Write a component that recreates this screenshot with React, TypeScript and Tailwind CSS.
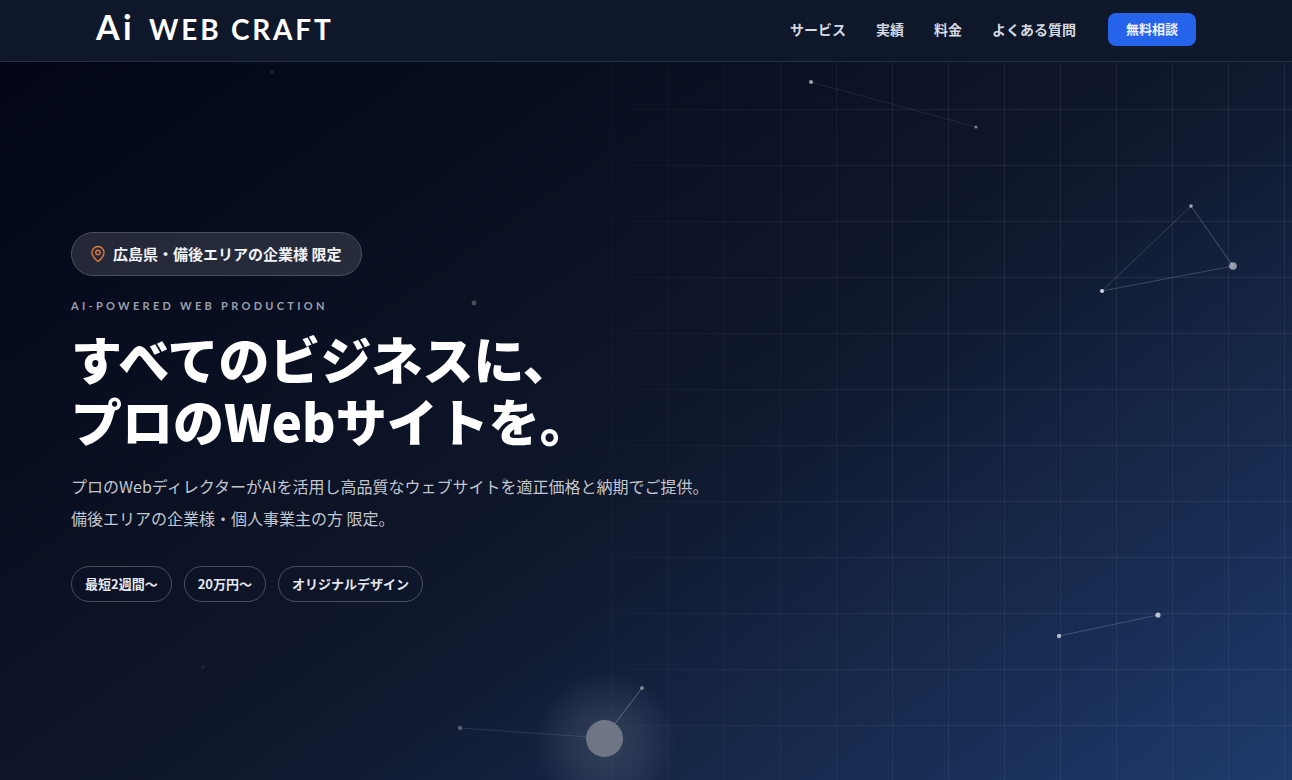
import React from "react";
import { MapPin } from "lucide-react";

const navItems = [
  { label: "サービス", href: "#service" },
  { label: "実績", href: "#works" },
  { label: "料金", href: "#price" },
  { label: "よくある質問", href: "#faq" },
];

const tags = ["最短2週間〜", "20万円〜", "オリジナルデザイン"];

// Particle network, in pixels from the hero's top left corner
const links = [
  { x1: 811, y1: 20, x2: 976, y2: 65, opacity: 0.08 },
  { x1: 1020, y1: 126, x2: 1066, y2: 184, opacity: 0.03 },
  { x1: 1191, y1: 144, x2: 1233, y2: 204, opacity: 0.24 },
  { x1: 1191, y1: 144, x2: 1102, y2: 229, opacity: 0.17 },
  { x1: 1102, y1: 229, x2: 1233, y2: 204, opacity: 0.18 },
  { x1: 1059, y1: 574, x2: 1158, y2: 553, opacity: 0.18 },
  { x1: 460, y1: 666, x2: 604, y2: 676, opacity: 0.11 },
  { x1: 642, y1: 626, x2: 604, y2: 676, opacity: 0.28 },
];

const dots = [
  { x: 272, y: 10, r: 2, opacity: 0.1 },
  { x: 811, y: 20, r: 2, opacity: 0.6 },
  { x: 976, y: 65, r: 1.6, opacity: 0.45 },
  { x: 1191, y: 144, r: 1.8, opacity: 0.6 },
  { x: 1233, y: 204, r: 3.8, opacity: 0.55 },
  { x: 1102, y: 229, r: 2, opacity: 0.8 },
  { x: 150, y: 236, r: 2, opacity: 0.04 },
  { x: 474, y: 241, r: 2.4, opacity: 0.25 },
  { x: 505, y: 419, r: 3, opacity: 0.15 },
  { x: 1059, y: 574, r: 2.2, opacity: 0.65 },
  { x: 1158, y: 553, r: 2.6, opacity: 0.7 },
  { x: 203, y: 605, r: 1.8, opacity: 0.08 },
  { x: 460, y: 666, r: 2.2, opacity: 0.28 },
  { x: 642, y: 626, r: 2, opacity: 0.42 },
];

function Header() {
  return (
    <header className="border-b border-[#253143] bg-[#0f172a]">
      <div className="mx-auto flex h-[61px] max-w-[1100px] items-center justify-between pb-0.5">
        <a
          href="#top"
          className="flex items-baseline gap-3.5 pb-1.5 font-['Lato',sans-serif] leading-none text-white"
        >
          <span className="text-[34px] font-bold tracking-widest">Ai</span>
          <span className="text-[28px] font-bold tracking-widest">WEB CRAFT</span>
        </a>
        <nav className="flex items-center gap-[30px] text-sm font-bold text-[#d5d9e1]">
          {navItems.map((item) => (
            <a key={item.href} href={item.href} className="pb-0.5">
              {item.label}
            </a>
          ))}
          <a
            href="#contact"
            className="ml-0.5 flex h-[33px] items-center rounded-lg bg-[#2563eb] px-[18px] text-[13px] text-[#edf2ff]"
          >
            無料相談
          </a>
        </nav>
      </div>
    </header>
  );
}

function Particles() {
  return (
    <svg className="absolute inset-0 h-full w-full" aria-hidden="true">
      <defs>
        <radialGradient id="glow">
          <stop offset="0" stopColor="#fff" stopOpacity="0.14" />
          <stop offset="0.5" stopColor="#fff" stopOpacity="0.08" />
          <stop offset="1" stopColor="#fff" stopOpacity="0" />
        </radialGradient>
      </defs>
      <circle cx="606" cy="681" r="72" fill="url(#glow)" />
      {links.map((l, i) => (
        <line
          key={i}
          x1={l.x1}
          y1={l.y1}
          x2={l.x2}
          y2={l.y2}
          stroke="#fff"
          strokeOpacity={l.opacity}
        />
      ))}
      {dots.map((d, i) => (
        <circle key={i} cx={d.x} cy={d.y} r={d.r} fill="#fff" fillOpacity={d.opacity} />
      ))}
      <circle cx="604.5" cy="676.5" r="18.5" fill="#6f7787" />
    </svg>
  );
}

function Hero() {
  return (
    <section className="relative flex flex-1 items-center overflow-hidden bg-[linear-gradient(145deg,#020617_0%,#0f172a_52%,#1e3a6c_100%)]">
      {/* Grid, fading in from the left */}
      <div className="absolute inset-y-0 right-0 w-[680px] bg-[linear-gradient(rgba(255,255,255,0.07)_1px,transparent_1px),linear-gradient(90deg,rgba(255,255,255,0.06)_1px,transparent_1px)] bg-[length:56px_56px] bg-[position:0_47px] [mask-image:linear-gradient(90deg,rgba(0,0,0,0.3),#000_40%)]" />
      <Particles />

      <div className="relative mx-auto w-full max-w-[1150px] pb-2">
        <p className="inline-flex h-11 items-center gap-1.5 rounded-full border border-[#4b505d] bg-white/12 pr-5 pl-[17px] text-[15px] font-bold text-[#f1f3f7]">
          <MapPin className="h-[18px] w-[18px] text-[#e07b3e]" strokeWidth={1.75} />
          広島県・備後エリアの企業様 限定
        </p>
        <p className="mt-[22px] font-['Lato',sans-serif] text-[11px] leading-4 font-bold tracking-[0.3em] text-[#9b9fab]">
          AI-POWERED WEB PRODUCTION
        </p>
        <h1 className="mt-[13px] text-[51px] leading-[62px] font-black text-white">
          すべてのビジネスに、
          <br />
          プロのWebサイトを。
        </h1>
        <p className="mt-[19px] text-base leading-8 text-[#c3c6ce]">
          プロのWebディレクターがAIを活用し高品質なウェブサイトを適正価格と納期でご提供。
          <br />
          備後エリアの企業様・個人事業主の方 限定。
        </p>
        <ul className="mt-8 flex flex-wrap gap-3">
          {tags.map((tag) => (
            <li
              key={tag}
              className="flex h-9 items-center rounded-full border border-white/25 px-[13px] text-[13px] font-bold text-[#e6e8ee]"
            >
              {tag}
            </li>
          ))}
        </ul>
      </div>
    </section>
  );
}

export default function App() {
  return (
    <div
      id="top"
      className="flex min-h-screen flex-col bg-[#0f172a] font-['Noto_Sans_CJK_JP',sans-serif]"
    >
      <Header />
      <Hero />
    </div>
  );
}
